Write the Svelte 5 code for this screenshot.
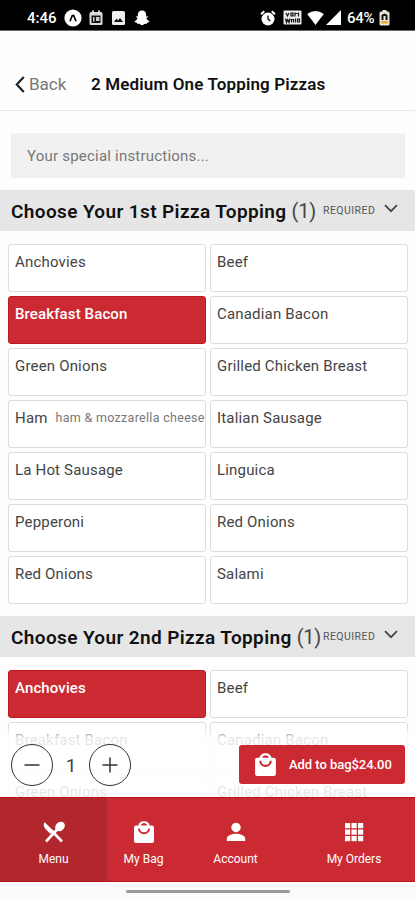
<script>
  const toppings = ['Anchovies', 'Beef', 'Breakfast Bacon', 'Canadian Bacon', 'Green Onions', 'Grilled Chicken Breast', 'Ham', 'Italian Sausage', 'La Hot Sausage', 'Linguica', 'Pepperoni', 'Red Onions', 'Red Onions', 'Salami'];
  const groups = [
    { title: 'Choose Your 1st Pizza Topping', items: toppings, selected: 2 },
    { title: 'Choose Your 2nd Pizza Topping', items: toppings.slice(0, 6), selected: 0 }
  ];
  const notes = { Ham: 'ham & mozzarella cheese' };
</script>

{#snippet bag(size)}
  <svg width={size} height={size} viewBox="0 0 24 24">
    <path fill="#fff" d="M20 5.500h-2.300a5.800 5.300 0 0 0-11.400 0H4Q2 5.500 2 7.500V21q0 2 2 2h16q2 0 2-2V7.500q0-2-2-2zM12 3a3.500 3 0 0 1 3.300 2.500H8.700A3.500 3 0 0 1 12 3z" />
    <path fill="none" stroke="#cc2a33" stroke-width="2" d="M7 8.500a5 4.800 0 0 0 10 0" />
  </svg>
{/snippet}

<div class="screen">
  <div class="status">
    <div class="left">
      <span class="clock">4:46</span>
      <svg class="i1" width="18" height="18" viewBox="0 0 18 18"><circle cx="9" cy="9" r="8.600" fill="#fff" /><path d="M6 12.200 8.300 6.500h1.400L12 12.200" fill="none" stroke="#000" stroke-width="1.700" /></svg>
      <svg class="i2" width="14" height="16" viewBox="0 0 14 16"><path d="M2 2h1V.5h2V2h4V.5h2V2h1q1.500 0 1.500 1.500v10Q13.500 15 12 15H2Q.5 15 .5 13.500v-10Q.5 2 2 2z" fill="#ddd" /><path d="M2.500 5.500h9V13h-9z" fill="#111" /><path d="M4 7h1.500v4.500H4zM7 7h3.500v4H7z" fill="#ccc" /></svg>
      <svg class="i3" width="13" height="14" viewBox="0 0 13 14"><rect width="13" height="14" rx="1.500" fill="#eee" /><path d="m2 11 2.500-3.500L6 9.500l2-2.500 3 4z" fill="#111" /></svg>
      <svg class="i4" width="16" height="16" viewBox="0 0 16 16"><path fill="#fff" d="M8 .5c3 0 4.300 2 4.200 5v1l1.600-.3c.5.900-.6 1.400-1.400 1.800.5 1.800 1.600 2.700 3.200 3.200-.2 1-1.200 1.200-2.300 1.400l-.5 1.200c-1.800-.3-2.400 0-3.200.8-.9.900-2.300.9-3.200 0-.8-.8-1.400-1.100-3.200-.8l-.5-1.200C1.600 12.400.6 12.200.4 11.200 2 10.700 3.100 9.800 3.600 8 2.800 7.600 1.700 7.100 2.200 6.200l1.600.3v-1C3.700 2.500 5 .5 8 .5z" /></svg>
    </div>
    <div class="right">
      <svg width="16" height="16" viewBox="0 0 16 16"><circle cx="8" cy="9" r="6.500" fill="#fff" /><path d="M1 4.300 4.300 1.300M15 4.300 11.700 1.300" stroke="#fff" stroke-width="2" /><path d="M8 5.500V9l2.300 2" fill="none" stroke="#000" stroke-width="1.300" /></svg>
      <svg class="r2" width="19" height="15" viewBox="0 0 19 15"><rect x=".5" y=".5" width="18" height="14" rx="1" fill="#eee" /><path d="m3 3 1.500 3L6 3M8 3h2v3H8zM12 2.500v4M12 3.500h2.500M15.500 2.500v4M2.500 8.500l1 4 1.200-3 1.300 3 1-4M8.500 12.500v-3h2v3M12.500 8.500v4M14.500 9h2v3h-2z" fill="none" stroke="#111" stroke-width="1.200" /></svg>
      <svg class="r3" width="17" height="14" viewBox="0 0 17 14"><path d="M.2 3Q8.500-3 16.800 3L8.500 14z" fill="#fff" /></svg>
      <svg class="r4" width="15" height="15" viewBox="0 0 15 15"><path d="M15 0v15H0z" fill="#fff" /></svg>
      <span class="percent">64%</span>
      <svg class="r5" width="11" height="16" viewBox="0 0 11 16"><path d="M3.500 0h4v1.500H9q1.500 0 1.500 1.500v11Q10.500 15.500 9 15.500H2Q.5 15.500.5 14V3Q.5 1.500 2 1.500h1.500z" fill="#e8e4d8" /><path d="M2.500 10V5l3-1.500 3 1.500v5z" fill="#111" /><path d="M4.500 6h2v5h-2z" fill="#eee" /><path d="M2.300 11h6.400v2.500H2.300z" fill="#e8ad18" /></svg>
    </div>
  </div>

  <header>
    <svg width="10" height="17" viewBox="0 0 10 17"><path d="M8.800 1 1.800 8.500l7 7.500" fill="none" stroke="#222" stroke-width="2.200" /></svg>
    <span class="back">Back</span>
    <h1>2 Medium One Topping Pizzas</h1>
  </header>

  <div class="instructions"><span>Your special instructions...</span></div>

  {#each groups as group}
    <section>
      <div class="heading">
        <h2>{group.title}</h2>
        <span class="count">(1)</span>
        <span class="required">REQUIRED</span>
        <svg width="14" height="9" viewBox="0 0 14 9"><path d="m1 1.200 6 6 6-6" fill="none" stroke="#444" stroke-width="1.700" /></svg>
      </div>
      <div class="grid">
        {#each group.items as item, i}
          <div class="option" class:selected={i === group.selected}>
            <span>{item}</span>
            {#if notes[item]}<small>{notes[item]}</small>{/if}
          </div>
        {/each}
      </div>
    </section>
  {/each}

  <div class="dock">
    <div class="order">
      <button class="round" aria-label="Decrease"><svg width="16" height="16" viewBox="0 0 16 16"><path d="M.5 8h15" stroke="#333" stroke-width="1.500" /></svg></button>
      <span class="qty">1</span>
      <button class="round" aria-label="Increase"><svg width="16" height="16" viewBox="0 0 16 16"><path d="M.5 8h15M8 .5v15" stroke="#333" stroke-width="1.500" /></svg></button>
      <button class="add">{@render bag(25)}<span>Add to bag$24.00</span></button>
    </div>
    <nav>
      <div class="tab menu">
        <svg width="24" height="24" viewBox="0 0 24 24"><path fill="#fff" d="M2.500 2 11.500 11l-3 3L3.500 9C1.500 7 1.300 4 2.500 2z" /><ellipse cx="18" cy="6.500" rx="4.300" ry="5.300" transform="rotate(45 18 6.500)" fill="#fff" /><path d="M16 8.500 4 21.500M9.500 10.500l10.500 11" stroke="#fff" stroke-width="2.600" /></svg>
        <span>Menu</span>
      </div>
      <div class="tab mybag">{@render bag(24)}<span>My Bag</span></div>
      <div class="tab account">
        <svg width="24" height="24" viewBox="0 0 24 24"><circle cx="12" cy="7.500" r="4.700" fill="#fff" /><path fill="#fff" d="M2.800 21v-2.200c0-3.300 5.400-5 9.200-5s9.200 1.700 9.200 5V21z" /></svg>
        <span>Account</span>
      </div>
      <div class="tab orders">
        <svg width="24" height="24" viewBox="0 0 24 24">
          {#each [0, 1, 2] as r}{#each [0, 1, 2] as c}<rect x={3 + c * 6.500} y={3 + r * 6.500} width="5.200" height="5.200" fill="#fff" />{/each}{/each}
        </svg>
        <span>My Orders</span>
      </div>
    </nav>
    <div class="system"><i></i></div>
  </div>
</div>

<style>
  :global(body) { margin: 0; background: #fefefe; }
  .screen { position: relative; width: 415px; height: 900px; overflow: hidden; background: #fefefe; font-family: Roboto, sans-serif; color: #444; }
  .screen :global(*) { box-sizing: border-box; }
  svg { display: block; flex: none; }
  span, h1, h2, small { white-space: nowrap; }
  .status { height: 31px; background: #000; color: #fff; display: flex; justify-content: space-between; padding: 5px 25px 0 27px; border-bottom: 1px solid #666; }
  .left, .right { display: flex; align-items: center; }
  .clock { width: 37px; font-size: 15px; font-weight: 500; }
  .i2 { margin-left: 7px; }
  .i3 { margin-left: 9px; }
  .i4 { margin-left: 9px; }
  .r2 { margin-left: 7px; }
  .r3 { margin-left: 5px; }
  .r4 { margin-left: 2px; }
  .percent { width: 31px; margin-left: 6px; font-size: 15px; font-weight: 500; letter-spacing: -.3px; }
  .r5 { margin-left: 1px; }
  header { height: 80px; display: flex; align-items: center; padding: 27px 0 0 15px; border-bottom: 1px solid #e8e8e8; }
  .back { width: 62px; margin-left: 4px; font-size: 17px; color: #777; }
  h1 { margin: 0; font-size: 17px; font-weight: 600; color: #111; letter-spacing: .14px; }
  .instructions { height: 45px; margin: 22px 10px 12px 11px; padding: 1px 0 0 16px; display: flex; align-items: center; background: #f1f1f1; font-size: 15px; color: #777; letter-spacing: .21px; }
  .heading { height: 41px; display: flex; align-items: center; background: #e6e6e6; padding: 0 17px 0 11px; }
  h2 { margin: 0; padding-top: 1px; font-size: 19px; font-weight: 600; color: #111; letter-spacing: .38px; }
  .count { margin-left: 5px; font-size: 20px; padding-top: 1px; letter-spacing: -.2px; }
  .required { margin-left: auto; width: 52px; font-size: 10.500px; color: #555; letter-spacing: .45px; }
  .heading svg { margin: -4px 0 0 9px; }
  .grid { display: grid; grid-template-columns: 198px 198px; gap: 4px; padding: 12.500px 0 0 7.500px; }
  section { height: 426px; }
  .option { height: 48px; display: flex; align-items: flex-start; padding: 7.500px 0 0 6.500px; border: 1px solid #ddd; border-radius: 3px; font-size: 15px; line-height: 20px; letter-spacing: .18px; overflow: hidden; background: #fff; }
  .option small { margin-left: 8px; font-size: 12.500px; color: #777; letter-spacing: .3px; }
  .selected { background: #cc2a33; border-color: #c01820; color: #fff; font-weight: 500; letter-spacing: .12px; }
  .dock { position: absolute; left: 0; bottom: 0; width: 415px; }
  .order { height: 68px; display: flex; align-items: center; padding: 3px 10px 0 11px; background: linear-gradient(rgba(255, 255, 255, .2), rgba(255, 255, 255, .87) 9px, rgba(255, 255, 255, .87)); }
  button { font-family: inherit; padding: 0; display: flex; align-items: center; }
  .round { width: 42px; height: 42px; border: 1.500px solid #333; border-radius: 50%; background: transparent; justify-content: center; }
  .qty { width: 36px; text-align: center; font-size: 19px; padding-top: 2px; }
  .add { width: 166px; height: 39px; margin: -1px 0 0 auto; padding-left: 14px; border: 0; border-radius: 3px; background: #cc2a33; color: #fff; font-size: 13px; font-weight: 500; }
  .add span { margin-left: 11px; letter-spacing: -.05px; }
  nav { height: 85px; display: grid; grid-template-columns: 107px 73px 111px 124px; background: #cc2a33; border: solid #b8141c; border-width: 1px 0; color: #fff; }
  .tab { display: flex; flex-direction: column; align-items: center; padding-top: 22px; font-size: 12px; }
  .tab span { margin-top: 8px; line-height: 14px; }
  .orders { padding-left: 2px; }
  .menu { background: #b2262e; }
  .system { height: 18px; background: #fbfbfb; display: flex; justify-content: center; padding-top: 8px; }
  .system i { width: 164px; height: 3px; border-radius: 2px; background: #999; }
</style>
